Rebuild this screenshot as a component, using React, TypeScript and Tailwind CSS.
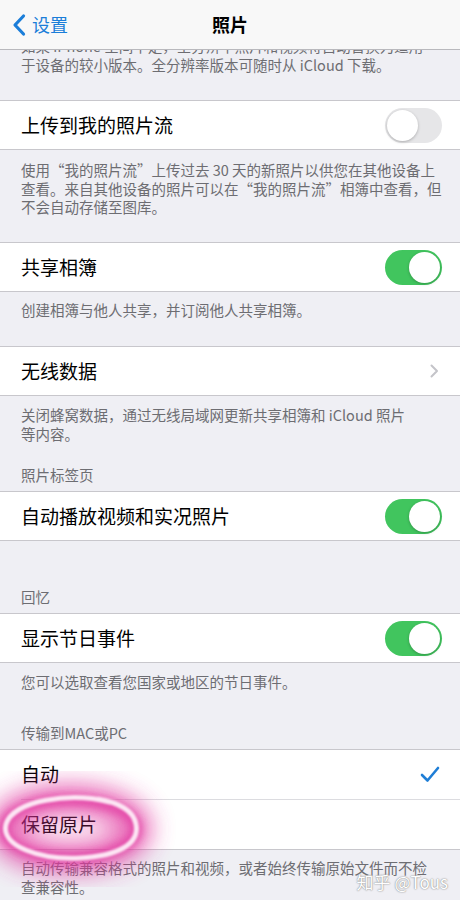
import React from 'react';

const font = { fontFamily: '"Noto Sans CJK SC", "Noto Sans", sans-serif' };

const Toggle: React.FC<{ on?: boolean }> = ({ on }) => (
  <div
    className={`relative w-[57px] h-[35px] rounded-full ${
      on ? 'bg-[#41c55e]' : 'bg-[#e6e6e8]'
    }`}
  >
    <div
      className={`absolute top-[2px] w-[31px] h-[31px] rounded-full bg-white shadow-[0_1px_3px_rgba(0,0,0,0.25)] ${
        on ? 'right-[2px]' : 'left-[2px]'
      }`}
    />
  </div>
);

const Chevron = () => (
  <svg width="9" height="14" viewBox="0 0 9 14" fill="none">
    <path d="M1.5 1.5 L7 7 L1.5 12.5" stroke="#c4c4c9" strokeWidth="2" strokeLinecap="round" strokeLinejoin="round" />
  </svg>
);

const Check = () => (
  <svg width="20" height="17" viewBox="0 0 20 17" fill="none">
    <path d="M2 9 L7.5 14.5 L18 2" stroke="#1f7ed6" strokeWidth="2.6" strokeLinecap="round" strokeLinejoin="round" />
  </svg>
);

const Row: React.FC<{ label: string; right?: React.ReactNode; h?: string }> = ({ label, right, h = 'h-[48px]' }) => (
  <div className={`flex items-center justify-between ${h} pl-[21px] pr-[18px] bg-white`}>
    <span className="text-[19px] text-black">{label}</span>
    {right}
  </div>
);

const Group: React.FC<{ children: React.ReactNode }> = ({ children }) => (
  <div className="border-y border-[#c8c7cc] bg-white">{children}</div>
);

const Note: React.FC<{ children: React.ReactNode; className?: string }> = ({ children, className = '' }) => (
  <p className={`px-[21px] text-[14.5px] leading-[18.5px] text-[#6d6d72] whitespace-nowrap ${className}`}>{children}</p>
);

export default function App() {
  return (
    <div className="relative w-[460px] h-[900px] overflow-hidden bg-[#efeff4]" style={font}>
      {/* nav bar */}
      <div className="absolute top-0 inset-x-0 z-10 h-[50px] bg-[#f8f8f8] border-b border-[#b9b9bd] flex items-center">
        <div className="flex items-center pl-[11px] text-[#1b7ed9]">
          <svg width="16" height="24" viewBox="0 0 16 24" fill="none">
            <path d="M12.5 3 L4 12 L12.5 21" stroke="#1b7ed9" strokeWidth="3.2" strokeLinecap="round" strokeLinejoin="round" />
          </svg>
          <span className="ml-[5px] text-[18px]">设置</span>
        </div>
        <span className="absolute left-1/2 -translate-x-1/2 text-[18px] font-bold text-black">照片</span>
      </div>

      <div className="h-[100px] pt-[37px]">
        <Note>
          如果 iPhone 空间不足，全分辨率照片和视频将自动替换为适用
          <br />
          于设备的较小版本。全分辨率版本可随时从 iCloud 下载。
        </Note>
      </div>

      <Group>
        <Row label="上传到我的照片流" right={<Toggle />} />
      </Group>
      <div className="h-[92px] pt-[11px]">
        <Note>
          使用“我的照片流”上传过去 30 天的新照片以供您在其他设备上
          <br />
          查看。来自其他设备的照片可以在“我的照片流”相簿中查看，但
          <br />
          不会自动存储至图库。
        </Note>
      </div>

      <Group>
        <Row label="共享相簿" right={<Toggle on />} />
      </Group>
      <div className="h-[54px] pt-[9px]">
        <Note>创建相簿与他人共享，并订阅他人共享相簿。</Note>
      </div>

      <Group>
        <Row label="无线数据" right={<span className="pr-[3px]"><Chevron /></span>} />
      </Group>
      <div className="h-[95px] pt-[10px] flex flex-col">
        <Note>
          关闭蜂窝数据，通过无线局域网更新共享相簿和 iCloud 照片
          <br />
          等内容。
        </Note>
        <Note className="mt-[23px]">照片标签页</Note>
      </div>

      <Group>
        <Row label="自动播放视频和实况照片" right={<Toggle on />} />
      </Group>
      <div className="h-[72px] pt-[47px]">
        <Note>回忆</Note>
      </div>

      <Group>
        <Row label="显示节日事件" right={<Toggle on />} />
      </Group>
      <div className="h-[86px] pt-[10px] flex flex-col">
        <Note>您可以选取查看您国家或地区的节日事件。</Note>
        <Note className="mt-[32px]">传输到MAC或PC</Note>
      </div>

      <Group>
        <Row label="自动" h="h-[49px]" right={<span className="pr-[2px]"><Check /></span>} />
        <div className="ml-[21px] h-px bg-[#dcdce0]" />
        <Row label="保留原片" h="h-[49px]" />
      </Group>
      <div className="pt-[9px]">
        <Note>
          自动传输兼容格式的照片和视频，或者始终传输原始文件而不检
          <br />
          查兼容性。
        </Note>
      </div>

      {/* pink hand-drawn highlight */}
      <svg className="absolute left-0 top-[760px] pointer-events-none" width="220" height="140" viewBox="0 0 220 140">
        <defs>
          <filter id="glow" x="-50%" y="-50%" width="200%" height="200%">
            <feGaussianBlur stdDeviation="12" />
          </filter>
          <filter id="glow2" x="-50%" y="-50%" width="200%" height="200%">
            <feGaussianBlur stdDeviation="4" />
          </filter>
          <filter id="soft" x="-20%" y="-20%" width="140%" height="140%">
            <feGaussianBlur stdDeviation="0.9" />
          </filter>
        </defs>
        <ellipse cx="70" cy="69" rx="66" ry="29" fill="none" stroke="#e0339c" strokeWidth="30" opacity="0.75" filter="url(#glow)" />
        <ellipse cx="70" cy="69" rx="66" ry="29" fill="none" stroke="#e23aa2" strokeWidth="10" opacity="0.85" filter="url(#glow2)" />
        <path
          d="M110 42 C 70 32, 14 40, 6 64 C 0 86, 40 100, 80 98 C 118 96, 140 84, 136 64 C 133 48, 115 42, 98 39"
          fill="none"
          stroke="#fde6f4"
          strokeWidth="5"
          strokeLinecap="round"
          filter="url(#soft)"
        />
      </svg>

      {/* watermark */}
      <div className="absolute right-[12px] top-[869px] text-[17px] text-white [text-shadow:0_0_1px_#888,0_0_2px_#999]">
        知乎 @Tous
      </div>
    </div>
  );
}
